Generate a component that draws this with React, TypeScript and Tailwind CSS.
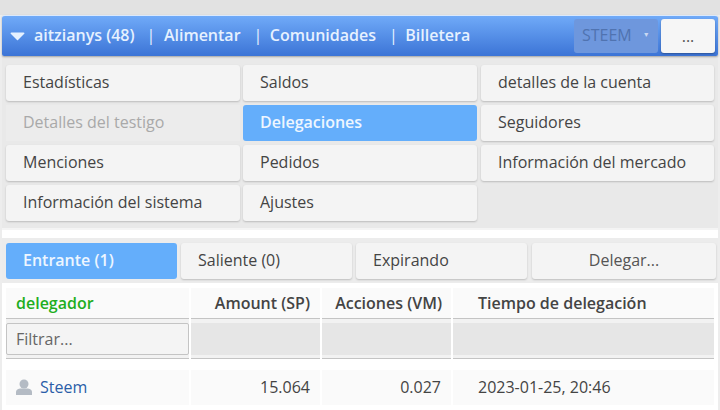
const menu = [
  { label: "Estadísticas" },
  { label: "Saldos" },
  { label: "detalles de la cuenta" },
  { label: "Detalles del testigo", disabled: true },
  { label: "Delegaciones", active: true },
  { label: "Seguidores" },
  { label: "Menciones" },
  { label: "Pedidos" },
  { label: "Información del mercado" },
  { label: "Información del sistema" },
  { label: "Ajustes" },
];

const MenuButton = ({ label, active, disabled }: { label: string; active?: boolean; disabled?: boolean }) => {
  if (active) {
    return (
      <div className="h-9 max-w-[234px] flex items-center pl-[17px] pb-[3px] rounded-[3px] bg-[#64aefb] text-[#eef6ff] font-semibold">
        {label}
      </div>
    );
  }
  if (disabled) {
    return <div className="h-9 max-w-[234px] flex items-center pl-[17px] pb-[3px] bg-[#ececec] text-[#a9a9a9]">{label}</div>;
  }
  return (
    <div className="h-9 max-w-[234px] flex items-center pl-[17px] pb-[3px] rounded-[3px] bg-[#f4f4f4] text-[#444] shadow-[0_1px_2px_rgba(0,0,0,0.2)]">
      {label}
    </div>
  );
};

export default function App() {
  return (
    <div className="h-[410px] w-[720px] overflow-hidden bg-[#ededed] text-[16px] font-['Open_Sans','Noto_Sans',sans-serif]">
      <div className="h-[15px] bg-[#e2e2e2]" />

      {/* top bar */}
      <div className="relative mx-[2px] h-[41px] flex items-center pb-[2px] rounded-t-[3px] rounded-b-[2px] border-t border-[#dbe9fc] bg-gradient-to-b from-[#70aaf8] to-[#3c74d6] shadow-[0_1px_2px_rgba(0,0,0,0.3)] text-[#e6f1ff] font-semibold">
        <svg width="15" height="9" viewBox="0 0 15 9" className="ml-[8px] mr-[9px] mt-[2px]">
          <path d="M0.5 1.5 Q0.5 0.5 1.5 0.5 H13.5 Q14.5 0.5 14.5 1.5 L8 8 Q7.5 8.5 7 8 Z" fill="#e6f1ff" />
        </svg>
        <span>aitzianys (48)</span>
        <span className="font-normal ml-[12px] mr-[8.5px]">|</span>
        <span>Alimentar</span>
        <span className="font-normal ml-[13px] mr-[7.5px]">|</span>
        <span>Comunidades</span>
        <span className="font-normal ml-[13px] mr-[7.5px]">|</span>
        <span>Billetera</span>
        <div className="ml-auto mt-[2px] h-[34px] w-[84px] flex items-center pb-[2px] rounded-[3px] bg-[#6e97dd] text-[#5073b0] font-normal pl-[8px]">
          STEEM
          <span className="ml-[11px] text-[7px] text-[#c9d8f2]">▼</span>
        </div>
        <div className="ml-[3px] mr-[3px] mt-[2px] h-[34px] w-[54px] flex items-center justify-center rounded-[3px] bg-[#f6f6f6] text-[#555] font-normal shadow-[0_1px_2px_rgba(0,0,0,0.3)]">
          ...
        </div>
      </div>

      <div className="mx-[2px] bg-white">
        {/* menu */}
        <div className="h-[174px] border-b-2 border-[#f4f4f4] bg-[#e9e9e9] px-[4px] pt-[9px]">
          <div className="grid grid-cols-[237px_238px_233px] gap-y-1">
            {menu.map((item) => (
              <MenuButton key={item.label} {...item} />
            ))}
          </div>
        </div>

        <div className="h-2 bg-white" />

        {/* tabs */}
        <div className="h-[45px] bg-[#ececec] px-[4px] pt-[5px]">
          <div className="flex">
            <div className="h-9 w-[171px] shrink-0 mr-[4px] flex items-center pl-[17px] pb-[3px] rounded-[3px] bg-[#64aefb] text-[#eef6ff] font-semibold">
              Entrante (1)
            </div>
            <div className="h-9 w-[171px] shrink-0 mr-[4px] flex items-center pl-[17px] pb-[3px] rounded-[3px] bg-[#f4f4f4] text-[#444] shadow-[0_1px_2px_rgba(0,0,0,0.2)]">
              Saliente (0)
            </div>
            <div className="h-9 w-[171px] shrink-0 mr-[5px] flex items-center pl-[17px] pb-[3px] rounded-[3px] bg-[#f4f4f4] text-[#444] shadow-[0_1px_2px_rgba(0,0,0,0.2)]">
              Expirando
            </div>
            <div className="h-9 w-[184px] shrink-0 flex items-center justify-center pb-[3px] rounded-[3px] bg-[#f4f4f4] text-[#555] shadow-[0_1px_2px_rgba(0,0,0,0.2)]">
              Delegar...
            </div>
          </div>
        </div>

        <div className="h-[5px] bg-white" />

        {/* delegation table */}
        <div className="mx-[4px] pb-[5px] grid grid-cols-[183px_129px_129px_261px] gap-x-[2px] text-[#444]">
          <div className="h-[31px] flex items-center pl-[10px] border-b border-[#c4c4c4] bg-[#fafafa] font-semibold text-[#1fae1f]">
            delegador
          </div>
          <div className="h-[31px] flex items-center justify-end pr-[10px] border-b border-[#c4c4c4] bg-[#fafafa] font-semibold">
            Amount (SP)
          </div>
          <div className="h-[31px] flex items-center justify-end pr-[9px] border-b border-[#c4c4c4] bg-[#fafafa] font-semibold whitespace-nowrap">
            Acciones (VM)
          </div>
          <div className="h-[31px] flex items-center pl-[25px] border-b border-[#c4c4c4] bg-[#fafafa] font-semibold">
            Tiempo de delegación
          </div>

          <div className="h-10 pt-1 border-b border-[#c4c4c4] bg-[#f2f2f2]">
            <div className="h-[32px] flex items-center pl-[9px] rounded-[2px] border border-[#c4c4c4] bg-[#f4f4f4] text-[#666]">
              Filtrar...
            </div>
          </div>
          <div className="h-10 pt-1 border-b border-[#c4c4c4] bg-[#f2f2f2]">
            <div className="h-[32px] bg-[#e6e6e6]" />
          </div>
          <div className="h-10 pt-1 border-b border-[#c4c4c4] bg-[#f2f2f2]">
            <div className="h-[32px] bg-[#e6e6e6]" />
          </div>
          <div className="h-10 pt-1 border-b border-[#c4c4c4] bg-[#f2f2f2]">
            <div className="h-[32px] bg-[#e6e6e6]" />
          </div>

          <div className="col-span-4 h-[11px]" />

          <div className="h-[35px] flex items-center pl-[10px] pb-[2px] bg-[#fafafa]">
            <svg width="16" height="16" viewBox="0 0 16 16" className="mr-[8px]">
              <circle cx="8" cy="5" r="4.5" fill="#b4bbc4" />
              <path d="M0 16 V13 Q0 10 4 9.5 H12 Q16 10 16 13 V16 Z" fill="#b4bbc4" />
            </svg>
            <span className="text-[#2a5ea8]">Steem</span>
          </div>
          <div className="h-[35px] flex items-center justify-end pr-[10px] pb-[2px] bg-[#fafafa]">15.064</div>
          <div className="h-[35px] flex items-center justify-end pr-[10px] pb-[2px] bg-[#fafafa]">0.027</div>
          <div className="h-[35px] flex items-center pl-[25px] pb-[2px] bg-[#fafafa]">2023-01-25, 20:46</div>
        </div>
      </div>
    </div>
  );
}
